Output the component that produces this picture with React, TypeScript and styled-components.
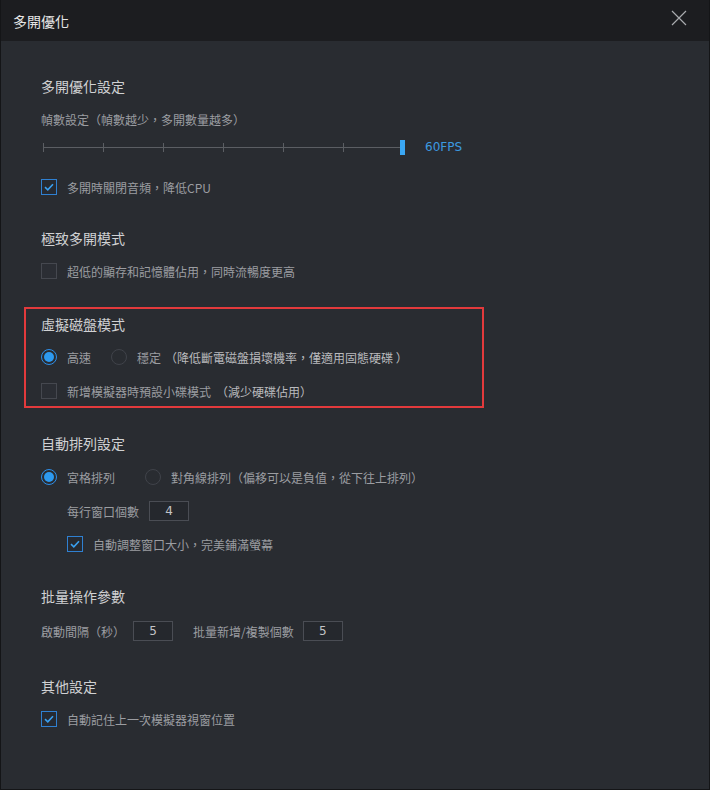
import React, { FC, ReactNode } from "react";
import styled, { createGlobalStyle } from "styled-components";

const GlobalStyle = createGlobalStyle`
  html, body {
    margin: 0;
    padding: 0;
    background: #141517;
  }
  body {
    font-family: "Noto Sans CJK TC", "Noto Sans", sans-serif;
  }
`;

const Window = styled.div`
  width: 710px;
  height: 790px;
  box-sizing: border-box;
  border: 1px solid #141517;
  border-top: none;
  background: #292c31;
  display: flex;
  flex-direction: column;
`;

const Header = styled.div`
  height: 41px;
  flex: none;
  background: #1c1d20;
  display: flex;
  align-items: center;
  justify-content: space-between;
  padding: 0 20px 0 12px;
`;

const HeaderTitle = styled.span`
  font-size: 14px;
  color: #e6e6e6;
`;

const CloseButton = styled.button`
  width: 18px;
  height: 18px;
  padding: 0;
  border: none;
  background: transparent;
  margin-top: -4px;
  display: flex;
  cursor: pointer;
`;

const Content = styled.div`
  padding: 35px 0 0 40px;
  display: flex;
  flex-direction: column;
`;

const SectionTitle = styled.div<{ $mt?: number }>`
  height: 20px;
  line-height: 20px;
  font-size: 14px;
  color: #d0d1d3;
  margin-top: ${(p) => p.$mt ?? 0}px;
`;

const Row = styled.div<{ $mt?: number; $indent?: number }>`
  height: 20px;
  display: flex;
  align-items: center;
  margin-top: ${(p) => p.$mt ?? 0}px;
  padding-left: ${(p) => p.$indent ?? 0}px;
  font-size: 12px;
  color: #9b9da1;
  white-space: nowrap;
`;

const Hint = styled.span<{ $ml?: number }>`
  color: #b9babd;
  margin-left: ${(p) => p.$ml ?? 0}px;
`;

const Highlight = styled.div`
  margin: 26px 0 0 -17px;
  width: 460px;
  box-sizing: border-box;
  border: 2px solid #e23a3c;
  padding: 5px 0 5px 15px;
  display: flex;
  flex-direction: column;
`;

const SliderTrack = styled.div`
  position: relative;
  width: 362px;
  height: 20px;
  margin-left: 2px;
`;

const TrackLine = styled.div`
  position: absolute;
  left: 0;
  right: 5px;
  top: 10px;
  height: 1px;
  background: #5b5e63;
`;

const Tick = styled.div`
  position: absolute;
  top: 6px;
  width: 1px;
  height: 9px;
  background: #5b5e63;
`;

const Thumb = styled.div`
  position: absolute;
  right: 0;
  top: 3px;
  width: 5px;
  height: 15px;
  background: #3aa7f4;
`;

const FpsLabel = styled.span`
  margin-left: 20px;
  color: #3c9ae0;
  font-size: 12px;
  font-family: "DejaVu Sans", "Noto Sans", sans-serif;
`;

const Box = styled.span<{ $checked?: boolean }>`
  width: 16px;
  height: 16px;
  box-sizing: border-box;
  flex: none;
  border: 1px solid ${(p) => (p.$checked ? "#2f80d1" : "#45484f")};
  background: ${(p) => (p.$checked ? "#262a31" : "#2b2e34")};
  display: flex;
  align-items: center;
  justify-content: center;
  margin-right: 10px;
`;

const RadioRing = styled.span<{ $checked?: boolean; $ml?: number }>`
  width: 16px;
  height: 16px;
  box-sizing: border-box;
  flex: none;
  border-radius: 50%;
  border: 1px solid ${(p) => (p.$checked ? "#2d8ee8" : "#40434a")};
  display: flex;
  align-items: center;
  justify-content: center;
  margin-right: 10px;
  margin-left: ${(p) => p.$ml ?? 0}px;
`;

const RadioDot = styled.span`
  width: 10px;
  height: 10px;
  border-radius: 50%;
  background: #2d9af0;
`;

const NumInput = styled.div<{ $ml?: number }>`
  width: 40px;
  height: 20px;
  box-sizing: border-box;
  border: 1px solid #4a4d54;
  background: #25282d;
  margin-left: ${(p) => p.$ml ?? 0}px;
  display: flex;
  align-items: center;
  justify-content: center;
  color: #c3c4c6;
  font-size: 12px;
  font-family: "DejaVu Sans", sans-serif;
`;

const Spaced = styled.span<{ $ml?: number }>`
  margin-left: ${(p) => p.$ml ?? 0}px;
`;

const Checkbox: FC<{ checked?: boolean }> = ({ checked }) => (
  <Box $checked={checked}>
    {checked && (
      <svg width="10" height="8" viewBox="0 0 10 8">
        <path d="M1 4.2 L3.8 6.8 L9 1.2" fill="none" stroke="#3aa0f0" strokeWidth="1.6" />
      </svg>
    )}
  </Box>
);

const Radio: FC<{ checked?: boolean; ml?: number }> = ({ checked, ml }) => (
  <RadioRing $checked={checked} $ml={ml}>
    {checked && <RadioDot />}
  </RadioRing>
);

const CheckRow: FC<{ checked?: boolean; mt?: number; indent?: number; children: ReactNode }> = ({
  checked,
  mt,
  indent,
  children,
}) => (
  <Row $mt={mt} $indent={indent}>
    <Checkbox checked={checked} />
    {children}
  </Row>
);

const ticks = [0, 60, 120, 180, 240, 300];

export default function App() {
  return (
    <>
      <GlobalStyle />
      <Window>
        <Header>
          <HeaderTitle>多開優化</HeaderTitle>
          <CloseButton>
            <svg width="16" height="16" viewBox="0 0 16 16">
              <path d="M1 1 L15 15 M15 1 L1 15" stroke="#a9abae" strokeWidth="1.2" />
            </svg>
          </CloseButton>
        </Header>
        <Content>
          <SectionTitle>多開優化設定</SectionTitle>
          <Row $mt={13}>幀數設定（幀數越少，多開數量越多）</Row>
          <Row $mt={8}>
            <SliderTrack>
              <TrackLine />
              {ticks.map((t) => (
                <Tick key={t} style={{ left: t }} />
              ))}
              <Thumb />
            </SliderTrack>
            <FpsLabel>60FPS</FpsLabel>
          </Row>
          <CheckRow checked mt={20}>
            多開時關閉音頻，降低CPU
          </CheckRow>

          <SectionTitle $mt={31}>極致多開模式</SectionTitle>
          <CheckRow mt={13}>超低的顯存和記憶體佔用，同時流暢度更高</CheckRow>

          <Highlight>
            <SectionTitle>虛擬磁盤模式</SectionTitle>
            <Row $mt={13}>
              <Radio checked />
              高速
              <Radio ml={20} />
              穩定
              <Hint $ml={4}>（降低斷電磁盤損壞機率，僅適用固態硬碟 ）</Hint>
            </Row>
            <CheckRow mt={14}>
              新增模擬器時預設小碟模式
              <Hint $ml={5}>（減少硬碟佔用）</Hint>
            </CheckRow>
          </Highlight>

          <SectionTitle $mt={25}>自動排列設定</SectionTitle>
          <Row $mt={14}>
            <Radio checked />
            宮格排列
            <Radio ml={30} />
            對角線排列（偏移可以是負值，從下往上排列）
          </Row>
          <Row $mt={14} $indent={26}>
            每行窗口個數
            <NumInput $ml={10}>4</NumInput>
          </Row>
          <CheckRow checked mt={13} indent={26}>
            自動調整窗口大小，完美鋪滿螢幕
          </CheckRow>

          <SectionTitle $mt={32}>批量操作參數</SectionTitle>
          <Row $mt={15}>
            啟動間隔（秒）
            <NumInput $ml={8}>5</NumInput>
            <Spaced $ml={20}>批量新增/複製個數</Spaced>
            <NumInput $ml={9}>5</NumInput>
          </Row>

          <SectionTitle $mt={35}>其他設定</SectionTitle>
          <CheckRow checked mt={13}>
            自動記住上一次模擬器視窗位置
          </CheckRow>
        </Content>
      </Window>
    </>
  );
}
